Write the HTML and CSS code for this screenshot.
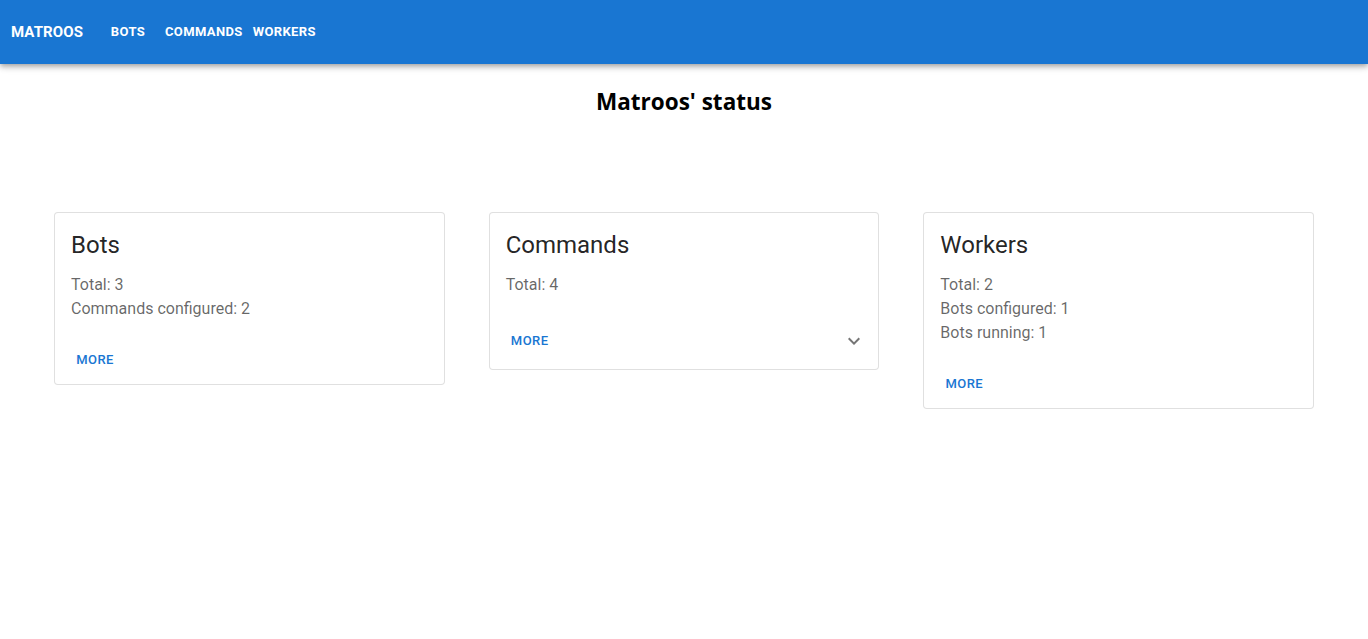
FILE: index.html
```html
<!DOCTYPE html>
<html lang="en">
<head>
<meta charset="utf-8">
<title>Matroos</title>
<link rel="stylesheet" href="styles.css">
</head>
<body>
<header class="appbar">
  <div class="brand">MATROOS</div>
  <nav class="nav">
    <a class="nav-btn" href="#">BOTS</a>
    <a class="nav-btn" href="#">COMMANDS</a>
    <a class="nav-btn" href="#">WORKERS</a>
  </nav>
</header>
<main class="main">
  <h2 class="page-title">Matroos' status</h2>
  <section class="cards">
    <div class="card">
      <div class="card-content">
        <h5 class="card-title">Bots</h5>
        <p class="card-line">Total: 3</p>
        <p class="card-line">Commands configured: 2</p>
      </div>
      <div class="card-actions">
        <button class="more-btn">MORE</button>
      </div>
    </div>
    <div class="card">
      <div class="card-content">
        <h5 class="card-title">Commands</h5>
        <p class="card-line">Total: 4</p>
      </div>
      <div class="card-actions">
        <button class="more-btn">MORE</button>
        <button class="icon-btn" aria-label="expand">
          <svg viewBox="0 0 24 24" width="24" height="24"><path d="M16.59 8.59 12 13.17 7.41 8.59 6 10l6 6 6-6z" fill="currentColor"/></svg>
        </button>
      </div>
    </div>
    <div class="card">
      <div class="card-content">
        <h5 class="card-title">Workers</h5>
        <p class="card-line">Total: 2</p>
        <p class="card-line">Bots configured: 1</p>
        <p class="card-line">Bots running: 1</p>
      </div>
      <div class="card-actions">
        <button class="more-btn">MORE</button>
      </div>
    </div>
  </section>
</main>
</body>
</html>
```
FILE: styles.css
```css
html, body {
  margin: 0;
  padding: 0;
  background: #fff;
  font-family: Roboto, "Liberation Sans", sans-serif;
}

.appbar {
  height: 64px;
  background: #1976d2;
  color: #fff;
  display: flex;
  align-items: center;
  padding: 0 11px;
  box-shadow: 0px 2px 4px -1px rgba(0,0,0,0.2), 0px 4px 5px 0px rgba(0,0,0,0.14), 0px 1px 10px 0px rgba(0,0,0,0.12);
  position: relative;
  z-index: 1;
}

.brand {
  font-size: 15px;
  font-weight: 700;
  letter-spacing: 0.1px;
  margin-right: 13px;
}

.nav {
  display: flex;
}

.nav-btn {
  color: #fff;
  text-decoration: none;
  font-size: 13px;
  font-weight: 700;
  letter-spacing: 0.37px;
  min-width: 64px;
  padding: 4px 5px;
  line-height: 24px;
  text-align: center;
  box-sizing: border-box;
}

.main {
  padding: 0 54px;
}

.page-title {
  font-family: "Open Sans", "Noto Sans", sans-serif;
  font-weight: 700;
  font-size: 22.5px;
  line-height: 30px;
  text-align: center;
  margin: 23px 0 95px;
  color: #000;
}

.cards {
  display: grid;
  grid-template-columns: repeat(3, 1fr);
  column-gap: 44px;
  align-items: start;
}

.card {
  border: 1px solid rgba(0,0,0,0.12);
  border-radius: 4px;
  background: #fff;
}

.card-content {
  padding: 16px 16px 16px;
}

.card-title {
  margin: 0 0 12px;
  font-size: 24px;
  font-weight: 400;
  line-height: 32px;
  color: rgba(0,0,0,0.87);
}

.card-line {
  margin: 0;
  font-size: 16px;
  line-height: 24px;
  color: rgba(0,0,0,0.6);
}

.card-actions {
  display: flex;
  align-items: center;
  padding: 8px;
}

.more-btn {
  font-family: Roboto, "Liberation Sans", sans-serif;
  background: none;
  border: 0;
  color: #1976d2;
  font-size: 13px;
  font-weight: 500;
  letter-spacing: 0.46px;
  line-height: 22.75px;
  padding: 4px 5px;
  min-width: 64px;
  cursor: pointer;
}

.icon-btn {
  margin-left: auto;
  margin-right: -4px;
  width: 40px;
  height: 40px;
  padding: 8px;
  border: 0;
  background: none;
  color: rgba(0,0,0,0.54);
  display: flex;
  align-items: center;
  justify-content: center;
  cursor: pointer;
}
```
